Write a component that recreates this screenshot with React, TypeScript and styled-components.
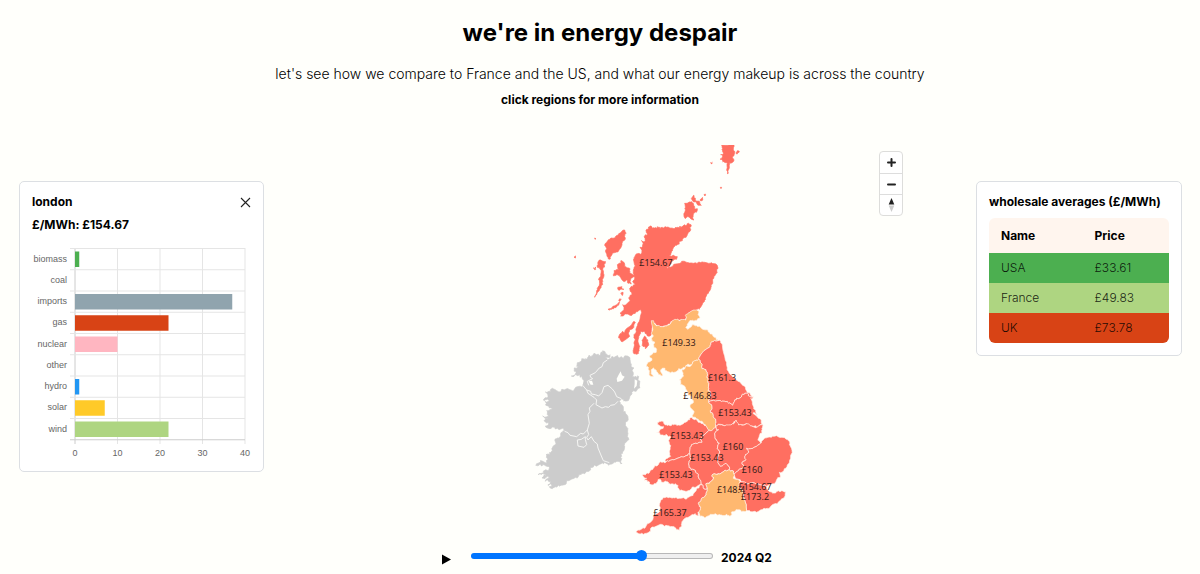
import React, { useState } from "react";
import styled, { createGlobalStyle } from "styled-components";

const GlobalStyle = createGlobalStyle`
  *, *::before, *::after { box-sizing: border-box; }
  body {
    margin: 0;
    background: #fffffb;
    color: #000;
    font-family: Inter, "Liberation Sans", sans-serif;
  }
`;

const Page = styled.div`
  display: flex;
  flex-direction: column;
  padding-top: 17px;
`;

const Header = styled.header`
  display: flex;
  flex-direction: column;
  align-items: center;
  text-align: center;
  padding: 0 20px;
`;

const Title = styled.h1`
  margin: 0 0 15px;
  font-size: 24px;
  line-height: 32px;
  font-weight: 700;
`;

const Subtitle = styled.p`
  margin: 0 0 6px;
  font-size: 14px;
  line-height: 20px;
  font-weight: 300;
`;

const Hint = styled.p`
  margin: 0;
  font-size: 12px;
  line-height: 20px;
  font-weight: 700;
`;

const Main = styled.main`
  display: grid;
  grid-template-columns: 245px minmax(0, 1fr) 206px;
  align-items: start;
  margin-top: 35px;
  padding: 0 18px 0 19px;
`;

const Panel = styled.section`
  margin-top: 36px;
  padding: 10px 12px 12px;
  background: #fff;
  border: 1px solid #dcdfe3;
  border-radius: 5px;
`;

const PanelHead = styled.div`
  display: flex;
  align-items: center;
  justify-content: space-between;
`;

const PanelTitle = styled.h2`
  margin: 0;
  font-size: 12px;
  line-height: 20px;
  font-weight: 700;
  white-space: nowrap;
`;

const PriceLine = styled.p`
  margin: 3px 0 8px;
  font-size: 12px;
  line-height: 20px;
  font-weight: 700;
`;

const CloseButton = styled.button`
  display: flex;
  padding: 0;
  border: 0;
  background: none;
  cursor: pointer;
`;

const Chart = styled.svg`
  display: block;
  width: 100%;
  height: auto;
  font-family: "Liberation Sans", Arial, sans-serif;
  font-size: 9px;
  fill: #666;
`;

const PriceTable = styled.table`
  width: 100%;
  margin-top: 6px;
  border-spacing: 0;
  border-radius: 6px;
  overflow: hidden;
  table-layout: fixed;
  font-size: 12px;
  text-align: left;
`;

const HeadCell = styled.th`
  height: 35px;
  padding: 0 12px;
  background: #fff5ee;
  font-weight: 700;

  &:first-child {
    width: 52%;
  }
`;

const Row = styled.tr<{ $color: string }>`
  background: ${(p) => p.$color};
`;

const Cell = styled.td`
  height: 30px;
  padding: 0 12px 1px;
  color: #0009;
  color: rgba(0, 0, 0, 0.85);
  font-weight: 300;
`;

const MapArea = styled.div`
  position: relative;
`;

const MapSvg = styled.svg`
  display: block;
  width: 100%;
  height: auto;
  font-family: "Noto Sans", "Open Sans", sans-serif;
  font-size: 9px;
`;

const ZoomControls = styled.div`
  position: absolute;
  top: 6px;
  right: 73px;
  display: flex;
  flex-direction: column;
  width: 24px;
  background: #fff;
  border: 1px solid #dddddb;
  border-radius: 4px;
`;

const ZoomButton = styled.button`
  display: flex;
  align-items: center;
  justify-content: center;
  height: 21px;
  padding: 0;
  border: 0;
  background: none;
  cursor: pointer;

  & + & {
    height: 21px;
    border-top: 1px solid #ddd;
  }
`;

const Timeline = styled.div`
  display: flex;
  align-items: center;
  justify-content: center;
  margin-top: 11px;
  padding-right: 2px;
`;

const PlayButton = styled.button`
  display: flex;
  justify-content: center;
  width: 40px;
  margin-right: 5px;
  padding: 4px 0 0;
  border: 0;
  background: none;
  cursor: pointer;
`;

const Slider = styled.input`
  appearance: none;
  width: 242px;
  height: 12px;
  margin: 0 8px 2px 0;
  background: none;

  &::-webkit-slider-runnable-track {
    height: 6px;
    border-radius: 3px;
    border: 1px solid #0000;
    background:
      linear-gradient(90deg, #0075ff 71%, #0000 71%) border-box,
      linear-gradient(#efefef, #efefef) padding-box,
      linear-gradient(#b8b8b8, #b8b8b8) border-box;
  }

  &::-webkit-slider-thumb {
    appearance: none;
    width: 11px;
    height: 11px;
    margin-top: -4px;
    border-radius: 50%;
    background: #0075ff;
  }
`;

const Quarter = styled.label`
  padding-top: 2px;
  font-size: 12px;
  line-height: 20px;
  font-weight: 700;
`;

type Shape = { fill: string; points: string };

const RED = "#ff6f61";
const ORANGE = "#ffb870";
const GREY = "#cccccc";

type Point = [number, number];

// Offsets the middle of an edge by an amount that depends only on its ends, so
// neighbouring regions share the same border.
function middle([x, y]: Point, [nx, ny]: Point, amount: number): Point {
  const seed = Math.sin((x + nx) * 12.9 + (y + ny) * 78.2) * 437;
  const a = (seed - Math.floor(seed) - 0.5) * 2 * amount;
  const b = Math.sin(seed) * amount;
  return [
    Math.round(((x + nx) / 2 + a) * 10) / 10,
    Math.round(((y + ny) / 2 + b) * 10) / 10,
  ];
}

function subdivide(pts: Point[], amount: number, minLength: number): Point[] {
  const out: Point[] = [];
  pts.forEach((p, i) => {
    const next = pts[(i + 1) % pts.length];
    out.push(p);
    if (Math.hypot(next[0] - p[0], next[1] - p[1]) > minLength) {
      out.push(middle(p, next, amount));
    }
  });
  return out;
}

function roughen(points: string, amount = 3): string {
  const pts = points.trim().split(/\s+/).map((p) => p.split(",").map(Number) as Point);
  return subdivide(subdivide(pts, amount, 7), amount * 0.7, 5).join(" ");
}

const highlands: Shape[] = [
  "240,258 246,262 254,264 262,260 270,266 280,264 290,262 300,264 312,266 322,262 330,258 338,258 344,254 350,256 356,250 363,254 360,262 362,270 354,278 350,288 340,294 330,304 320,316 308,328 304,338 298,348 310,346 322,350 312,360 304,366 300,374 290,384 306,380 318,372 330,370 344,364 356,368 370,370 386,366 404,367 424,368 438,372 444,384 442,396 434,408 428,422 424,440 416,456 408,470 404,484 396,496 388,508 378,514 364,516 354,524 348,534 340,544 326,540 310,542 300,550 288,556 272,558 258,552 250,546 248,560 246,580 240,588 230,582 222,574 212,576 206,590 204,606 208,622 206,640 190,638 192,622 196,600 192,584 200,562 208,544 214,520 208,510 196,520 180,526 166,522 152,528 150,520 162,510 158,494 170,492 184,480 176,474 186,464 180,450 188,440 196,434 188,424 194,412 190,390 196,378 190,360 196,345 204,340 212,345 216,330 210,322 220,312 214,302 226,302 222,290 232,284 228,272 234,268",
  "130,404 132,392 146,390 142,374 152,370 156,362 164,372 170,384 180,386 182,400 194,406 184,414 180,424 184,432 174,430 170,420 160,424 150,410 138,406",
  "164,270 168,280 160,290 166,298 156,310 152,324 140,336 126,344 118,358 112,350 108,338 110,326 104,316 112,304 124,294 136,290 146,282 154,276",
  "84,366 92,360 106,364 104,378 98,390 102,404 96,420 98,434 90,446 80,462 74,472 80,452 88,436 86,420 92,404 90,388 82,382",
  "114,508 130,498 148,486 140,500 128,506",
  "146,590 156,576 164,578 172,564 188,548 196,548 188,566 176,578 176,592 160,604 152,600",
  "216,600 224,588 234,600 236,616 226,626 218,618",
  "344,190 358,186 370,190 374,202 382,206 376,216 370,228 372,240 358,232 346,236 342,220 346,208",
  "364,176 372,166 376,178 388,184 394,196 382,194 372,186",
  "390,180 398,172 396,182",
  "402,164 406,162 405,168",
  "454,15 492,15 490,28 494,38 488,50 492,60 486,68 478,66 478,84 474,102 470,90 472,70 458,66 450,58 462,52 452,44 460,38 456,28",
  "498,38 504,32 508,34 502,42",
  "422,68 427,67 426,72",
  "451,142 455,142 453,146",
  "142,444 156,440 162,448 150,450",
  "152,460 158,456 156,466",
  "74,294 78,296 75,298",
  "12,352 17,348 17,354",
  "70,384 78,382 76,389",
  "146,480 154,478 150,484",
].map((points) => ({ fill: RED, points }));

const north: Shape[] = [
  { fill: ORANGE, points: "64,62 72,68 80,78 96,80 112,76 124,66 134,58 150,62 168,60 166,46 178,38 192,30 206,34 204,44 210,52 198,62 186,62 172,72 168,84 176,86 186,74 198,76 214,84 234,90 246,102 258,112 264,122 244,126 240,140 222,152 210,168 206,178 196,182 184,194 168,196 160,202 146,206 136,216 120,220 108,212 98,204 92,214 98,226 88,224 78,210 70,204 64,216 70,230 60,228 56,210 50,200 56,186 66,176 60,166 74,158 80,148 72,138 74,126 64,120 70,108 64,100 68,84" },
  { fill: RED, points: "264,122 272,124 278,144 284,168 290,196 298,220 312,234 330,246 346,262 358,278 368,290 358,288 348,280 336,284 330,294 314,300 308,316 296,310 284,304 262,302 246,302 236,302 242,286 234,272 236,250 230,232 228,214 216,206 214,190 206,178 210,168 222,152 240,140 244,126" },
  { fill: ORANGE, points: "206,178 214,190 216,206 228,214 230,232 236,250 234,272 242,286 236,302 246,318 242,338 250,350 258,366 256,384 244,392 232,388 226,374 212,364 200,356 186,348 192,334 180,322 190,308 184,290 174,282 166,262 152,254 148,240 160,226 156,212 166,200 184,196 196,182" },
  { fill: RED, points: "236,302 246,302 262,302 284,304 296,310 308,316 314,300 330,294 336,284 348,280 358,288 370,290 362,296 368,314 378,332 384,344 370,338 380,348 390,356 396,372 382,381 366,378 350,371 326,375 318,361 308,371 284,377 264,373 258,380 258,366 250,350 242,338 246,318" },
];

const south: Shape[] = [
  { fill: RED, points: "84,22 96,18 106,30 122,32 134,28 146,30 160,26 172,18 182,8 190,12 204,20 216,26 228,32 236,46 222,60 212,74 216,82 188,88 180,104 180,118 168,122 148,128 128,134 108,140 106,134 122,124 118,108 122,92 116,78 122,66 108,58 92,60 80,52 92,42 100,34 86,30" },
  { fill: RED, points: "108,140 128,134 148,128 168,122 180,118 184,134 176,146 184,164 196,166 206,180 212,196 218,210 204,212 190,216 180,226 164,228 148,224 142,210 126,206 112,200 96,202 84,194 78,206 60,208 52,200 42,196 50,190 36,180 52,174 60,168 70,160 84,150 96,142" },
  { fill: RED, points: "258,36 244,47 236,46 222,60 212,74 216,82 188,88 180,104 180,118 184,134 176,146 184,164 196,166 206,180 212,196 218,210 222,222 232,220 228,206 242,200 252,188 246,180 258,178 274,174 286,166 298,164 294,152 284,146 270,152 264,142 262,128 270,110 262,100 268,84 258,72 254,56 266,44" },
  { fill: RED, points: "258,36 264,28 284,32 308,26 318,16 326,30 350,26 366,33 382,36 396,27 398,36 396,52 388,62 384,76 392,84 380,94 366,100 350,100 356,112 346,122 348,134 336,142 340,156 326,166 312,178 310,168 298,164 294,152 284,146 270,152 264,142 262,128 270,110 262,100 268,84 258,72 254,56 266,44" },
  { fill: RED, points: "392,84 402,72 418,66 440,62 464,68 480,84 486,106 482,130 472,150 462,166 448,172 452,186 440,194 430,206 410,214 394,210 378,208 362,204 348,204 332,198 318,192 312,178 326,166 340,156 336,142 348,134 346,122 356,112 350,100 366,100 380,94" },
  { fill: RED, points: "330,200 348,204 362,204 378,208 394,210 410,214 420,230 436,234 450,230 466,230 464,246 452,256 440,266 424,272 412,280 396,284 380,292 362,290 350,286 346,262 340,244 338,226 326,216" },
  { fill: ORANGE, points: "246,180 258,178 274,174 286,166 298,164 310,168 312,178 310,190 330,200 326,216 338,226 340,244 346,262 350,286 334,290 318,284 306,290 300,304 290,298 272,300 256,296 240,300 224,308 210,304 206,290 212,276 206,262 216,248 228,240 232,220 228,206 242,200 252,188" },
  { fill: RED, points: "222,222 232,220 228,240 216,248 206,262 212,276 206,290 208,300 196,296 182,302 168,308 156,320 154,336 148,346 136,338 120,336 104,334 92,328 78,334 62,340 56,352 42,358 26,356 18,352 30,346 44,340 58,324 70,306 80,296 92,286 88,270 94,254 110,246 130,248 148,250 170,252 186,242 198,228 208,214 218,210" },
];

const irelandCoast =
  "196,60 206,50 216,50 222,40 236,46 244,36 256,38 270,44 256,54 262,60 276,50 290,48 304,50 322,48 330,58 334,72 342,84 340,98 342,112 352,108 360,124 358,144 346,154 334,156 328,176 314,182 304,176 298,184 310,200 316,220 322,244 316,256 324,280 324,300 314,318 308,340 302,352 306,370 290,364 276,372 262,372 246,368 234,376 216,382 206,394 190,400 176,404 160,416 146,422 134,434 116,436 100,442 88,440 100,428 84,434 92,424 76,424 90,412 66,414 78,404 54,404 70,394 84,392 86,380 66,378 48,376 62,366 80,370 84,358 78,344 92,338 98,322 108,310 112,294 122,280 134,274 120,268 104,262 90,266 76,258 86,248 72,242 82,236 68,228 86,228 80,212 98,206 84,198 76,184 88,182 70,180 84,170 76,156 92,148 110,152 126,148 144,152 160,154 172,140 188,136 196,130 190,120 180,108 164,106 154,108 166,94 162,84 176,80 172,68 184,62";

const irelandBorders = [
  "262,60 250,68 246,80 238,84 226,98 210,106 212,112 218,116 202,124 206,136",
  "188,136 200,150 212,154 214,162 226,164 236,168 246,158 252,140 264,136 276,146 284,156 290,170 304,176",
  "200,150 204,160 222,172 230,180 228,194 246,204 256,200 266,202 272,196 284,194 294,184",
  "222,190 208,204 210,214 204,224 208,250 202,270 190,282 182,280 170,290 150,286 144,278 134,274",
  "202,270 206,284 200,292 204,300 214,290 222,304 232,312 234,324 244,348 250,362 268,368",
  "172,300 184,298 196,290 196,298 200,314 192,322 174,318 172,300",
];

const lakes = [
  "296,104 302,94 306,106 314,110 306,122 292,126 290,116",
  "344,118 352,122 350,138 342,146 344,132",
  "206,124 216,122 220,134 212,134",
];

const labels: [number, number, string][] = [
  [656, 263, "£154.67"],
  [679, 343, "£149.33"],
  [722, 378, "£161.3"],
  [700, 396, "£146.83"],
  [735, 413, "£153.43"],
  [687, 436, "£153.43"],
  [733, 447, "£160"],
  [707, 458, "£153.43"],
  [752, 470, "£160"],
  [676, 475, "£153.43"],
  [731, 490, "£148.4"],
  [755, 487, "£154.67"],
  [755, 497, "£173.2"],
  [670, 513, "£165.37"],
];

const Region = ({ fill, points }: Shape) => (
  <polygon points={roughen(points)} fill={fill} stroke="#fff3ec" strokeWidth={2} strokeLinejoin="round" />
);

const EnergyMap = () => (
  <MapSvg viewBox="264 145 712 390" role="img" aria-label="Electricity prices by region">
    <g transform="translate(520 340) scale(0.3333)">
      <polygon points={roughen(irelandCoast, 5)} fill={GREY} stroke={GREY} strokeWidth={2} />
      {irelandBorders.map((points) => (
        <polyline key={points} points={points} fill="none" stroke="#f5f5f3" strokeWidth={3} />
      ))}
      {lakes.map((points) => (
        <polygon key={points} points={points} fill="#fffffb" />
      ))}
    </g>
    <g transform="translate(570 140) scale(0.3333)">
      {highlands.map((s) => (
        <polygon key={s.points} points={roughen(s.points)} fill={s.fill} stroke={s.fill} strokeWidth={2} />
      ))}
    </g>
    <g transform="translate(630 300) scale(0.3333)">
      {north.map((s) => <Region key={s.points} {...s} />)}
    </g>
    <g transform="translate(630 415) scale(0.3333)">
      {south.map((s) => <Region key={s.points} {...s} />)}
    </g>
    <g textAnchor="middle" fill="#3a1d18">
      {labels.map(([x, y, text]) => (
        <text key={`${x}-${y}`} x={x} y={y + 3}>{text}</text>
      ))}
    </g>
  </MapSvg>
);

const mix = [
  { name: "biomass", value: 1, color: "#4caf50" },
  { name: "coal", value: 0, color: "#424242" },
  { name: "imports", value: 37, color: "#90a4ae" },
  { name: "gas", value: 22, color: "#d84315" },
  { name: "nuclear", value: 10, color: "#ffb6c1" },
  { name: "other", value: 0, color: "#9e9e9e" },
  { name: "hydro", value: 1, color: "#2196f3" },
  { name: "solar", value: 7, color: "#ffca28" },
  { name: "wind", value: 22, color: "#aed581" },
];

const STEP = 21.25;
const UNIT = 4.25;
const AXIS = 43;

const MixChart = () => (
  <Chart viewBox="0 0 219 216" role="img" aria-label="Energy makeup">
    {[0, 10, 20, 30, 40].map((v) => (
      <g key={v}>
        <line x1={AXIS + v * UNIT} x2={AXIS + v * UNIT} y1={5} y2={201} stroke={v ? "#e5e5e5" : "#ccc"} />
        <text x={AXIS + v * UNIT} y={213} textAnchor="middle">{v}</text>
      </g>
    ))}
    {[...mix, null].map((_, i) => (
      <line key={i} x1={38} x2={213} y1={5.5 + i * STEP} y2={5.5 + i * STEP} stroke={i === 9 ? "#ccc" : "#e5e5e5"} />
    ))}
    {mix.map((m, i) => (
      <g key={m.name}>
        <rect x={AXIS} y={8.5 + i * STEP} width={m.value * UNIT} height={15.5} fill={m.color} />
        <text x={35} y={18.5 + i * STEP} textAnchor="end">{m.name}</text>
      </g>
    ))}
  </Chart>
);

const averages = [
  { name: "USA", price: "£33.61", color: "#4caf50" },
  { name: "France", price: "£49.83", color: "#aed581" },
  { name: "UK", price: "£73.78", color: "#d84315" },
];

export default function App() {
  const [step, setStep] = useState(5);
  return (
    <Page>
      <GlobalStyle />
      <Header>
        <Title>we're in energy despair</Title>
        <Subtitle>
          let's see how we compare to France and the US, and what our energy makeup is across the country
        </Subtitle>
        <Hint>click regions for more information</Hint>
      </Header>
      <Main>
        <Panel>
          <PanelHead>
            <PanelTitle>london</PanelTitle>
            <CloseButton aria-label="Close">
              <svg width="11" height="11" viewBox="0 0 11 11" stroke="#222" strokeWidth="1.1">
                <path d="M1 1l9 9M10 1l-9 9" />
              </svg>
            </CloseButton>
          </PanelHead>
          <PriceLine>£/MWh: £154.67</PriceLine>
          <MixChart />
        </Panel>
        <MapArea>
          <EnergyMap />
          <ZoomControls>
            <ZoomButton aria-label="Zoom in">
              <svg width="9" height="9" viewBox="0 0 9 9" stroke="#222" strokeWidth="2" strokeLinecap="round">
                <path d="M4.5 1v7M1 4.5h7" />
              </svg>
            </ZoomButton>
            <ZoomButton aria-label="Zoom out">
              <svg width="9" height="9" viewBox="0 0 9 9" stroke="#222" strokeWidth="2" strokeLinecap="round">
                <path d="M1 4.5h7" />
              </svg>
            </ZoomButton>
            <ZoomButton aria-label="Reset north">
              <svg width="7" height="14" viewBox="0 0 7 14">
                <path d="M3.5 0L6.3 6.5H.7z" fill="#222" />
                <path d="M3.5 14L6.3 7.5H.7z" fill="#ccc" />
              </svg>
            </ZoomButton>
          </ZoomControls>
        </MapArea>
        <Panel>
          <PanelTitle>wholesale averages (£/MWh)</PanelTitle>
          <PriceTable>
            <thead>
              <tr>
                <HeadCell scope="col">Name</HeadCell>
                <HeadCell scope="col">Price</HeadCell>
              </tr>
            </thead>
            <tbody>
              {averages.map((a) => (
                <Row key={a.name} $color={a.color}>
                  <Cell>{a.name}</Cell>
                  <Cell>{a.price}</Cell>
                </Row>
              ))}
            </tbody>
          </PriceTable>
        </Panel>
      </Main>
      <Timeline>
        <PlayButton aria-label="Play">
          <svg width="9" height="11" viewBox="0 0 9 11">
            <path d="M0 .5l9 5-9 5z" />
          </svg>
        </PlayButton>
        <Slider
          id="quarter"
          type="range"
          min={0}
          max={7}
          value={step}
          onChange={(e) => setStep(Number(e.target.value))}
        />
        <Quarter htmlFor="quarter">2024 Q2</Quarter>
      </Timeline>
    </Page>
  );
}
